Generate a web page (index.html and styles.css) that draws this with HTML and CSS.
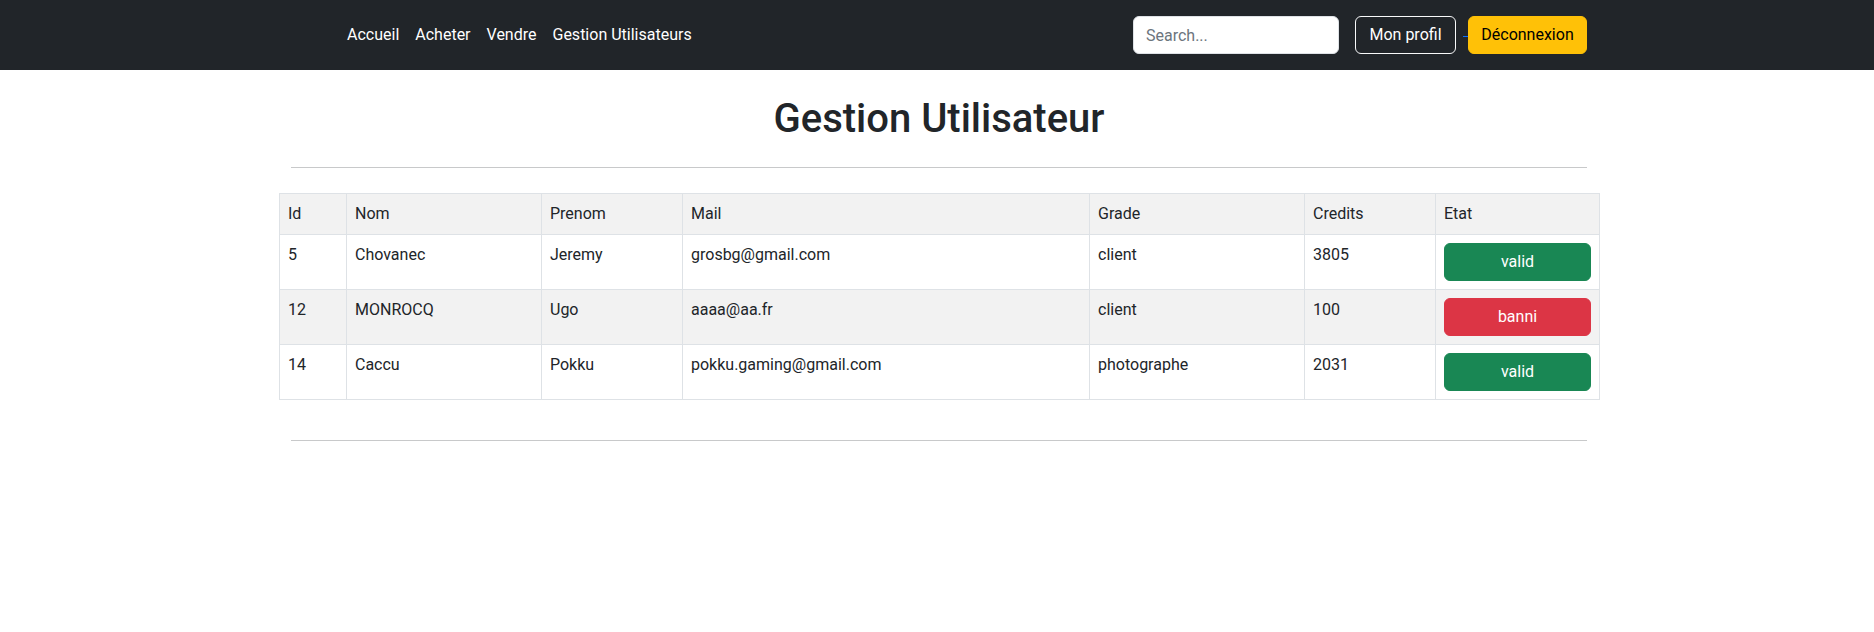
FILE: index.html
```html
<!DOCTYPE html>
<html lang="fr">
<head>
<meta charset="utf-8">
<title>Gestion Utilisateur</title>
<link rel="stylesheet" href="styles.css">
</head>
<body>
<nav class="navbar">
  <div class="nav-inner">
    <ul class="nav-links">
      <li><a class="nav-link" href="#">Accueil</a></li>
      <li><a class="nav-link" href="#">Acheter</a></li>
      <li><a class="nav-link" href="#">Vendre</a></li>
      <li><a class="nav-link" href="#">Gestion Utilisateurs</a></li>
    </ul>
    <div class="nav-right">
      <input class="search" type="text" placeholder="Search...">
      <a class="btn btn-outline" href="#">Mon profil</a>
      <span class="link-space"></span>
      <a class="btn btn-warning" href="#">Déconnexion</a>
    </div>
  </div>
</nav>
<main class="main">
  <h1 class="title">Gestion Utilisateur</h1>
  <hr class="rule">
  <table class="users">
    <colgroup>
      <col class="c-id"><col class="c-nom"><col class="c-prenom"><col class="c-mail"><col class="c-grade"><col class="c-credits"><col class="c-etat">
    </colgroup>
    <thead>
      <tr><th>Id</th><th>Nom</th><th>Prenom</th><th>Mail</th><th>Grade</th><th>Credits</th><th>Etat</th></tr>
    </thead>
    <tbody>
      <tr><td>5</td><td>Chovanec</td><td>Jeremy</td><td>grosbg@gmail.com</td><td>client</td><td>3805</td><td><button class="state state-valid">valid</button></td></tr>
      <tr class="striped"><td>12</td><td>MONROCQ</td><td>Ugo</td><td>aaaa@aa.fr</td><td>client</td><td>100</td><td><button class="state state-banni">banni</button></td></tr>
      <tr><td>14</td><td>Caccu</td><td>Pokku</td><td>pokku.gaming@gmail.com</td><td>photographe</td><td>2031</td><td><button class="state state-valid">valid</button></td></tr>
    </tbody>
  </table>
  <hr class="rule">
</main>
</body>
</html>
```
FILE: styles.css
```css
* { box-sizing: border-box; }
html, body { margin: 0; padding: 0; }
body {
  font-family: Roboto, "Open Sans", sans-serif;
  font-size: 16px;
  line-height: 1.5;
  color: #212529;
  background: #fff;
}
.navbar {
  background: #212529;
  height: 70px;
}
.nav-inner {
  width: 1296px;
  margin: 0 calc(50% - 650px) 0 calc(50% - 646px);
  height: 100%;
  display: flex;
  align-items: center;
  justify-content: space-between;
}
.nav-links {
  list-style: none;
  margin: 0 0 0 48px;
  padding: 0;
  display: flex;
}
.nav-link {
  display: block;
  padding: 8px;
  color: #fff;
  text-decoration: none;
  line-height: 24px;
}
.nav-right {
  display: flex;
  align-items: center;
}
.search {
  width: 206px;
  height: 38px;
  padding: 6px 12px;
  font: inherit;
  color: #212529;
  background: #fff;
  border: 1px solid #dee2e6;
  border-radius: 6px;
  margin-right: 16px;
}
.search::placeholder { color: #6c757d; }
.btn {
  display: inline-block;
  height: 38px;
  padding: 6px 0;
  line-height: 24px;
  text-align: center;
  border: 1px solid transparent;
  border-radius: 6px;
  text-decoration: none;
  font-size: 16px;
}
.btn-outline {
  width: 101px;
  color: #fff;
  border-color: #f8f9fa;
}
.btn-warning {
  width: 119px;
  background: #ffc107;
  border-color: #ffc107;
  color: #000;
}
.link-space {
  display: inline-block;
  width: 5px;
  height: 1px;
  margin: 2px 0 0 7px;
  background: #0d6efd;
}
.main {
  width: 1320px;
  margin: 0 calc(50% - 662px) 0 calc(50% - 658px);
  padding-top: 25px;
}
.title {
  margin: 0 0 24px;
  font-size: 40px;
  font-weight: 500;
  line-height: 1.2;
  text-align: center;
}
.rule {
  margin: 0 12px;
  border: 0;
  border-top: 1px solid #c8c9ca;
}
.users {
  width: 100%;
  margin: 25px 0 40px;
  border-collapse: collapse;
  table-layout: fixed;
  border: 1px solid #dee2e6;
}
.c-id { width: 67px; }
.c-nom { width: 195px; }
.c-prenom { width: 141px; }
.c-mail { width: 407px; }
.c-grade { width: 215px; }
.c-credits { width: 131px; }
.c-etat { width: 164px; }
.users th, .users td {
  border: 1px solid #dee2e6;
  padding: 8px;
  text-align: left;
  vertical-align: top;
  font-weight: 400;
  line-height: 24px;
}
.users thead tr { background: #f2f2f2; }
.users tr.striped { background: #f2f2f2; }
.state {
  display: block;
  width: 100%;
  height: 38px;
  border: 1px solid transparent;
  border-radius: 6px;
  color: #fff;
  font: inherit;
  line-height: 24px;
  padding: 6px 12px;
}
.state-valid { background: #198754; border-color: #198754; }
.state-banni { background: #dc3545; border-color: #dc3545; }
```
